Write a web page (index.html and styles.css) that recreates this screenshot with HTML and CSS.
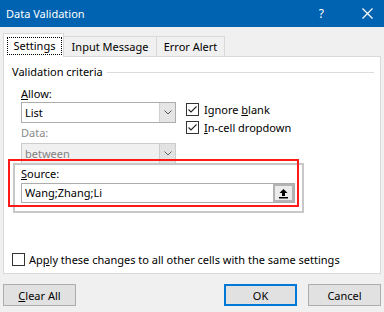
FILE: index.html
```html
<!DOCTYPE html>
<html>
<head>
<meta charset="utf-8">
<link rel="stylesheet" href="styles.css">
</head>
<body>
<div class="dialog">
  <div class="titlebar">
    <span class="title">Data Validation</span>
    <span class="help">?</span>
    <svg class="close" width="11" height="11" viewBox="0 0 11 11"><path d="M0.5 0.5 L10.5 10.5 M10.5 0.5 L0.5 10.5" stroke="#fff" stroke-width="1.2"/></svg>
  </div>
  <div class="tabs">
    <div class="tab active"><span class="focus">Settings</span></div>
    <div class="tab">Input Message</div>
    <div class="tab last">Error Alert</div>
  </div>
  <div class="panel">
    <div class="grouphead">
      <span class="glabel">Validation criteria</span>
      <span class="gline"></span>
    </div>
    <div class="group">
      <div class="criteria">
        <div class="leftcol">
          <div class="lbl"><u>A</u>llow:</div>
          <div class="combo">
            <span class="ctext">List</span>
            <span class="cbtn"><svg width="8" height="5" viewBox="0 0 8 5"><polyline points="0.5,0.5 4,4 7.5,0.5" fill="none" stroke="#555" stroke-width="1"/></svg></span>
          </div>
          <div class="lbl disabled">Data:</div>
          <div class="combo dis">
            <span class="ctext">between</span>
            <span class="cbtn"><svg width="8" height="5" viewBox="0 0 8 5"><polyline points="0.5,0.5 4,4 7.5,0.5" fill="none" stroke="#666" stroke-width="1"/></svg></span>
          </div>
        </div>
        <div class="rightcol">
          <div class="chkrow"><span class="chk"><svg width="11" height="11" viewBox="0 0 11 11"><polyline points="1.5,5.5 4,8 9.5,2.5" fill="none" stroke="#222" stroke-width="1.1"/></svg></span><span>Ignore <u>b</u>lank</span></div>
          <div class="chkrow"><span class="chk"><svg width="11" height="11" viewBox="0 0 11 11"><polyline points="1.5,5.5 4,8 9.5,2.5" fill="none" stroke="#222" stroke-width="1.1"/></svg></span><span><u>I</u>n-cell dropdown</span></div>
        </div>
      </div>
      <div class="source">
        <div class="lbl"><u>S</u>ource:</div>
        <div class="input">
          <span class="itext">Wang;Zhang;Li</span>
          <span class="upbtn"><svg width="11" height="11" viewBox="0 0 11 11"><path d="M5.5 1 L9.5 5 L7 5 L7 8 L4 8 L4 5 L1.5 5 Z" fill="#000"/><rect x="1" y="9" width="9" height="1.5" fill="#000"/></svg></span>
        </div>
        <div class="annot"></div>
      </div>
    </div>
    <div class="applyrow">
      <span class="chk"></span>
      <span>Ap<u>p</u>ly these changes to all other cells with the same settings</span>
    </div>
  </div>
  <div class="footer">
    <button class="btn"><u>C</u>lear All</button>
    <button class="btn ok">OK</button>
    <button class="btn cancel">Cancel</button>
  </div>
</div>
</body>
</html>
```

FILE: styles.css
```css
* { box-sizing: border-box; }
html, body { margin: 0; padding: 0; }
body {
  width: 384px;
  height: 312px;
  overflow: hidden;
  background: #f0f0f0;
  font-family: "Noto Sans", "Open Sans", sans-serif;
  font-size: 11px;
  color: #000;
}
u { text-decoration: underline; text-underline-offset: 1px; }
.dialog { width: 384px; height: 312px; }
.titlebar {
  height: 27px;
  background: #0063b1;
  color: #fff;
  display: flex;
  align-items: center;
  padding-left: 6px;
}
.title { flex: 1; font-size: 11px; line-height: 16px; }
.help { font-size: 12px; margin-right: 38px; line-height: 16px; }
.close { margin-right: 11px; }

.tabs {
  display: flex;
  align-items: flex-end;
  height: 29px;
  padding-left: 3px;
}
.tab {
  height: 20px;
  border: 1px solid #d9d9d9;
  border-bottom: none;
  border-left: none;
  line-height: 20px;
  width: 93px;
  text-align: center;
}
.tab.last { width: 68px; }
.tab.active {
  height: 24px;
  width: 61px;
  background: #fff;
  border-left: 1px solid #d9d9d9;
  padding: 3px 0 0 3px;
  margin-bottom: -1px;
  position: relative;
  z-index: 1;
  text-align: left;
}
.focus {
  display: block;
  width: 55px;
  height: 18px;
  border: 1px dotted #000;
  line-height: 16px;
  text-align: center;
}

.panel {
  margin-left: 3px;
  width: 378px;
  height: 218px;
  background: #fff;
  border: 1px solid #d9d9d9;
}
.grouphead {
  display: flex;
  align-items: center;
  height: 16px;
  margin: 7px 6px 0 8px;
  gap: 4px;
}
.glabel { line-height: 16px; }
.gline { flex: 1; height: 1px; background: #dcdcdc; }
.group {
  height: 163px;
  padding-left: 17px;
}
.criteria {
  display: flex;
  gap: 10px;
  padding-top: 6px;
}
.leftcol { width: 155px; }
.lbl { line-height: 16px; height: 16px; }
.lbl.disabled { color: #8a8a8a; margin-top: 2px; margin-bottom: 2px; }
.combo {
  height: 21px;
  border: 1px solid #adadad;
  display: flex;
  background: #fff;
}
.combo .ctext { flex: 1; line-height: 19px; padding-left: 3px; }
.cbtn {
  width: 16px;
  background: #e5e5e5;
  border-left: 1px solid #d0d0d0;
  display: flex;
  align-items: center;
  justify-content: center;
}
.combo.dis { border-color: #cccccc; background: #f0f0f0; color: #838383; }
.combo.dis .cbtn { background: #e2e2e2; border-left-color: #cccccc; }
.rightcol { padding-top: 14px; }
.chkrow { display: flex; align-items: center; height: 18px; gap: 5px; }
.chk {
  width: 13px;
  height: 13px;
  border: 1px solid #333;
  background: #fff;
  display: inline-flex;
  align-items: center;
  justify-content: center;
  flex: none;
}
.source {
  position: relative;
  margin: -1px 0 0 -8px;
  width: 291px;
  height: 50px;
  border: 2px solid #c8c8c8;
  padding: 1px 0 0 6px;
}
.input {
  margin-top: 1px;
  width: 274px;
  height: 20px;
  border: 1px solid #adadad;
  display: flex;
  align-items: center;
}
.itext { flex: 1; padding-left: 3px; line-height: 18px; }
.upbtn {
  width: 21px;
  height: 18px;
  border: 2px solid #b4b4b4;
  background: #ececec;
  display: flex;
  align-items: center;
  justify-content: center;
}
.annot {
  position: absolute;
  left: -7px;
  top: -6px;
  width: 291px;
  height: 48px;
  border: 2px solid #ff1a1a;
}
.applyrow {
  display: flex;
  align-items: center;
  gap: 4px;
  margin: 9px 0 0 8px;
  height: 14px;
}
.footer {
  display: flex;
  padding: 10px 3px 0 3px;
}
.btn {
  width: 73px;
  height: 22px;
  border: 1px solid #adadad;
  background: #e1e1e1;
  font: inherit;
  color: #000;
  padding: 0;
}
.btn.ok { margin-left: auto; border: 2px solid #0078d7; }
.btn.cancel { margin-left: 11px; }
```
